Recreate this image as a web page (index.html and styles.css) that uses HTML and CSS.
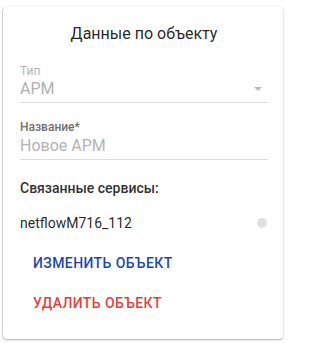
FILE: index.html
```html
<!DOCTYPE html>
<html lang="ru">
<head>
<meta charset="utf-8">
<title>Данные по объекту</title>
<link rel="stylesheet" href="styles.css">
</head>
<body>
<div class="card">
  <div class="title">Данные по объекту</div>
  <div class="field field-disabled">
    <div class="label">Тип</div>
    <div class="control control-select">
      <span class="value">АРМ</span>
      <svg class="arrow" width="8" height="4" viewBox="0 0 8 4"><path d="M0 0 L4 4 L8 0 Z" fill="#b9b9b9"/></svg>
    </div>
  </div>
  <div class="field">
    <div class="label label-strong">Название*</div>
    <div class="control">
      <span class="value placeholder">Новое АРМ</span>
    </div>
  </div>
  <div class="section">Связанные сервисы:</div>
  <div class="service">
    <span class="service-name">netflowM716_112</span>
    <span class="dot"></span>
  </div>
  <div class="actions">
    <button class="btn btn-primary">Изменить объект</button>
    <button class="btn btn-danger">Удалить объект</button>
  </div>
</div>
</body>
</html>
```
FILE: styles.css
```css
* { box-sizing: border-box; }
html, body { margin: 0; padding: 0; background: #fff; }
body { font-family: Roboto, "Noto Sans", Arial, sans-serif; width: 289px; height: 343px; overflow: hidden; }

.card {
  margin: 7px 0 0 3px;
  width: 280px;
  height: 332px;
  background: #fff;
  border-radius: 4px;
  box-shadow: 0 1px 3px rgba(0,0,0,0.2), 0 1px 1px rgba(0,0,0,0.14), -1px 0 0 #e6e6ee;
  padding: 15px 15px 0 17px;
  display: flex;
  flex-direction: column;
}

.title {
  font-size: 16px;
  line-height: 24px;
  text-align: center;
  color: rgba(0,0,0,0.87);
  margin-bottom: 18px;
}

.field { display: flex; flex-direction: column; margin-bottom: 16px; }
.label { font-size: 12px; line-height: 14px; color: #b5b5b5; }
.label-strong { color: #6f6f6f; font-weight: 500; }
.control {
  display: flex;
  align-items: center;
  justify-content: space-between;
  border-bottom: 1px solid #dcdcdc;
  padding: 2px 6px 4px 0;
}
.control-select { padding: 1px 6px 4px 0; }
.field-disabled { margin-bottom: 17px; }
.value { font-size: 16px; line-height: 19px; color: #b0b0b0; }
.placeholder { color: #b3b3b3; }
.arrow { display: block; margin-top: 1px; }

.section {
  font-size: 14px;
  line-height: 20px;
  font-weight: 500;
  color: #333;
  margin-top: 2px;
}

.service {
  display: flex;
  align-items: center;
  justify-content: space-between;
  margin-top: 15px;
  height: 20px;
}
.service-name { font-size: 14px; color: rgba(0,0,0,0.87); }
.dot { width: 10px; height: 10px; border-radius: 50%; background: #e0e0e0; margin-right: 1px; }

.actions { display: flex; flex-direction: column; align-items: flex-start; margin-top: 18px; gap: 16px; }
.btn {
  font-family: Roboto, "Noto Sans", Arial, sans-serif;
  font-size: 14px;
  font-weight: 500;
  text-transform: uppercase;
  letter-spacing: 0.4px;
  line-height: 24px;
  background: none;
  border: 0;
  padding: 0 8px;
  margin-left: 5px;
  cursor: pointer;
}
.btn-primary { color: #1c46b4; }
.btn-danger { color: #e53f3a; }
```
